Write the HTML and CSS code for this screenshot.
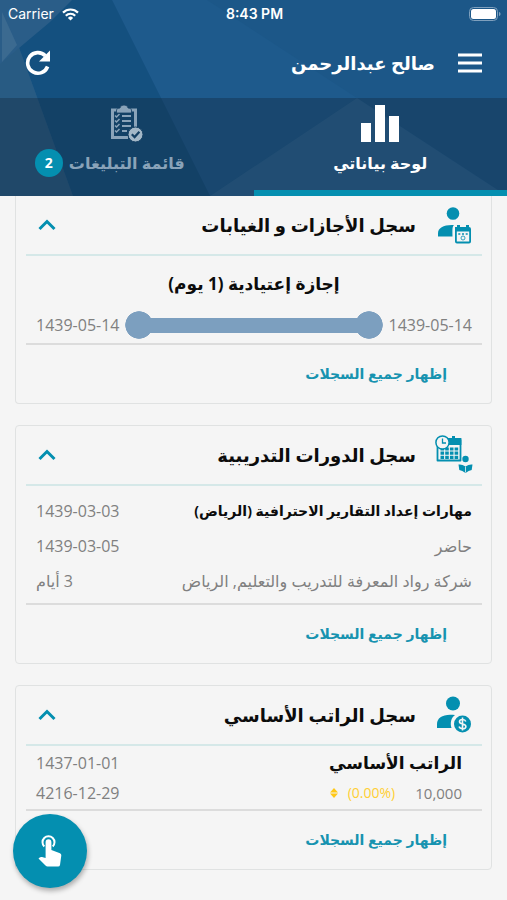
FILE: index.html
```html
<!DOCTYPE html>
<html lang="ar" dir="rtl">
<head>
<meta charset="utf-8">
<meta name="viewport" content="width=device-width, initial-scale=1">
<title>لوحة بياناتي</title>
<link rel="stylesheet" href="styles.css">
</head>
<body>
<header class="top">
  <svg class="top-art" viewBox="0 0 507 196" preserveAspectRatio="none" aria-hidden="true">
    <path fill="#1c5788" d="M0 0H507V196H0z"/>
    <path fill="#1e5a8c" d="M112 0 207 0 357 98 210 196z"/>
    <path fill="#2a6393" d="M357 98 210 196H507z"/>
    <path fill="#14507f" d="M62 0H112L210 196H73L17 42z"/>
    <path fill="#285b83" d="M0 62 17 42 73 196H0z"/>
    <path fill="#2a5d88" d="M0 0H72L50 22 0 64z"/>
    <path fill="#3b6a90" d="M2 12 17 45 2 62z"/>
  </svg>
  <div class="status" dir="ltr">
    <span class="carrier">Carrier
      <svg width="17" height="13" viewBox="0 0 17 13" fill="none" stroke="#fff" stroke-width="2.200" aria-hidden="true"><path d="M1 4.600a10.600 10.600 0 0 1 15 0M3.800 7.700a6.600 6.600 0 0 1 9.400 0"/><path d="M8.500 12.500 5.900 9.900a3.700 3.700 0 0 1 5.200 0z" fill="#fff" stroke="none"/></svg>
    </span>
    <span class="clock">8:43 PM</span>
    <svg class="battery" width="32" height="15" viewBox="0 0 32 15" aria-hidden="true"><rect x=".5" y=".5" width="28" height="13" rx="4" fill="none" stroke="#7fa0bd"/><rect x="2" y="2" width="25" height="10" rx="2.500" fill="#fff"/><path d="M30 5c2 .6 2 3.400 0 4z" fill="#7fa0bd"/></svg>
  </div>
  <div class="bar">
    <button class="icon-btn" type="button" aria-label="القائمة"><svg width="24" height="20" viewBox="0 0 24 20" fill="#fff"><path d="M0 .5h24v3H0zM0 8.500h24v3H0zM0 16.500h24v3H0z"/></svg></button>
    <h1 class="name">صالح عبدالرحمن</h1>
    <button class="icon-btn" type="button" aria-label="تحديث"><svg width="26" height="26" viewBox="0 0 26 26"><path d="M22.600 16.500A10.300 10.300 0 1 1 20.300 5.700" fill="none" stroke="#fff" stroke-width="3.600"/><path d="M25 .5v11H14z" fill="#fff"/></svg></button>
  </div>
  <nav class="tabs">
    <button class="tab tab-on" type="button">
      <svg width="38" height="38" viewBox="0 0 38 38" fill="#fff" aria-hidden="true"><path d="M0 18h10v19H0zM14 0h10v37H14zM28 11h10v26H28z"/></svg>
      <span class="tab-label">لوحة بياناتي</span>
    </button>
    <button class="tab tab-off" type="button">
      <svg width="33" height="38" viewBox="0 0 33 38" aria-hidden="true"><g fill="none" stroke="#8aa3b9"><path d="M18 32.500H2.500V5H25.500V23" stroke-width="3"/><path d="M12 11h9M12 16h9M12 21h9M12 26h5" stroke-width="2"/><path d="m5 10.500 1.500 1.500L9.500 9M5 15.500l1.500 1.500 3-3M5 20.500l1.500 1.500 3-3M5 25.500l1.500 1.500 3-3" stroke-width="1.500"/></g><path d="M6.500 8V5q0-2 3.500-2 0-3 4-3t4 3q3.500 0 3.500 2v3z" fill="#8aa3b9" stroke="#143f63" stroke-width=".8"/><circle cx="25.500" cy="29.500" r="7.500" fill="#a3b7c7" stroke="#143f63" stroke-width="1"/><path d="m21.800 29.300 2.800 2.800 4.800-5.300" fill="none" stroke="#143f63" stroke-width="2.200"/></svg>
      <span class="tab-label">قائمة التبليغات<span class="badge">2</span></span>
    </button>
  </nav>
</header>

<main class="cards">
  <section class="card card-first">
    <button class="card-head" type="button" aria-expanded="true">
      <svg class="card-icon" width="40" height="40" viewBox="0 0 40 40" aria-hidden="true"><circle cx="20" cy="8.500" r="6.300" fill="#048fb0"/><path d="M5 31.500v-3c0-6 6-9 16-8.500-2 2-1.500 5-1.500 11.500z" fill="#048fb0"/><path d="M22 22h2v-2h3v2h6v-2h3v2q2 0 2 2v12.500q0 2-2 2H24q-2 0-2-2V24q0-2 0-2z" fill="#048fb0"/><path d="M23.800 26.500h12.400v10H23.800z" fill="#f5f5f5"/><path d="M25.300 29h2M29 29h2M32.700 29h2" stroke="#048fb0" stroke-width="1.600"/><circle cx="30" cy="33" r="2" fill="none" stroke="#048fb0" stroke-width=".8"/></svg>
      <span class="card-title">سجل الأجازات و الغيابات</span>
      <svg class="chev" width="18" height="12" viewBox="0 0 18 12" aria-hidden="true"><path d="m1.500 10 7.500-7.500L16.500 10" fill="none" stroke="#048fb0" stroke-width="3"/></svg>
    </button>
    <div class="card-body leave">
      <h3 class="leave-title">إجازة إعتيادية (1 يوم)</h3>
      <div class="span-row">
        <span class="num">1439-05-14</span><span class="span-line"></span><span class="num">1439-05-14</span>
      </div>
    </div>
    <div class="card-foot"><a class="more" href="#leaves">إظهار جميع السجلات</a></div>
  </section>

  <section class="card">
    <button class="card-head" type="button" aria-expanded="true">
      <svg class="card-icon" width="40" height="40" viewBox="0 0 40 40" aria-hidden="true"><path d="M4.500 5h23v20.500H4.500z" fill="#f5f5f5" stroke="#048fb0" stroke-width="1.800" stroke-linejoin="round"/><path d="M5 3h14V1h3v2h6.400v7H5z" fill="#048fb0"/><path d="M7.500 14h18M7.500 18.200h18M7.500 22.400h18" stroke="#048fb0" stroke-width="3.200" stroke-dasharray="3.600 1.100"/><circle cx="9.500" cy="7.500" r="6.600" fill="#f5f5f5" stroke="#048fb0" stroke-width="1.500"/><path d="M9.500 3.500V8H13" fill="none" stroke="#048fb0" stroke-width="1.300"/><circle cx="32.500" cy="24" r="3.200" fill="#048fb0"/><path d="M25.500 29.500q3.500-.5 7 2 3.500-2.500 7-2l-.8 5.500q-3 .5-6.200 3-3.200-2.500-6.200-3z" fill="#048fb0"/><path d="M32.500 31.500v6" stroke="#b9dfe8"/></svg>
      <span class="card-title">سجل الدورات التدريبية</span>
      <svg class="chev" width="18" height="12" viewBox="0 0 18 12" aria-hidden="true"><path d="m1.500 10 7.500-7.500L16.500 10" fill="none" stroke="#048fb0" stroke-width="3"/></svg>
    </button>
    <div class="card-body course">
      <div class="line"><strong class="course-name">مهارات إعداد التقارير الاحترافية (الرياض)</strong><span class="num">1439-03-03</span></div>
      <div class="line"><span>حاضر</span><span class="num">1439-03-05</span></div>
      <div class="line"><span>شركة رواد المعرفة للتدريب والتعليم, الرياض</span><span>3 أيام</span></div>
    </div>
    <div class="card-foot"><a class="more" href="#courses">إظهار جميع السجلات</a></div>
  </section>

  <section class="card">
    <button class="card-head" type="button" aria-expanded="true">
      <svg class="card-icon" width="40" height="40" viewBox="0 0 40 40" aria-hidden="true"><circle cx="20" cy="8.500" r="7" fill="#048fb0"/><path d="M4 33v-4c0-7 7-10.500 18-9-4 3-5 8-3.500 13z" fill="#048fb0"/><circle cx="29.500" cy="29" r="8.500" fill="#048fb0"/><path d="M32.800 26.500c-.5-1.500-1.800-2-3.300-2-1.800 0-3 .8-3 2.200 0 3.200 6.400 1.500 6.400 4.800 0 1.500-1.400 2.300-3.300 2.300-1.800 0-3-.7-3.500-2.200M29.500 22.500v13" fill="none" stroke="#f5f5f5" stroke-width="1.600"/></svg>
      <span class="card-title">سجل الراتب الأساسي</span>
      <svg class="chev" width="18" height="12" viewBox="0 0 18 12" aria-hidden="true"><path d="m1.500 10 7.500-7.500L16.500 10" fill="none" stroke="#048fb0" stroke-width="3"/></svg>
    </button>
    <div class="card-body pay">
      <div class="line"><strong class="pay-name">الراتب الأساسي</strong><span class="num">1437-01-01</span></div>
      <div class="line"><span class="amount"><span class="figure">10,000</span><span class="change"><bdi dir="ltr">(0.00%)</bdi></span><svg width="8" height="10" viewBox="0 0 8 10" fill="#ffc817" aria-hidden="true"><path d="M4 0 8 4.400H0zM0 5.600h8L4 10z"/></svg></span><span class="num">4216-12-29</span></div>
    </div>
    <div class="card-foot"><a class="more" href="#salary">إظهار جميع السجلات</a></div>
  </section>
</main>

<button class="fab" type="button" aria-label="إجراءات">
  <svg width="24" height="34" viewBox="0 0 24 34" aria-hidden="true"><path d="M6.300 12.500A6 6 0 1 1 14.700 12.500" fill="none" stroke="#fff" stroke-width="2"/><path d="M7.600 24V8.200a2.900 2.900 0 0 1 5.800 0V16l8.600 3.300q1.500.7 1.300 2.200L22 31q-.3 1.500-2 1.500H9.500q-1 0-2-1L.5 24.600q1.500-2.200 3.500-1.500z" fill="#fff"/></svg>
</button>
</body>
</html>
```
FILE: styles.css
```css
* { box-sizing: border-box; }

body {
  margin: 0;
  min-height: 100vh;
  background: #f5f5f5;
  color: #808080;
  font: 16px/24px "Open Sans", "DejaVu Sans", sans-serif;
}

button {
  margin: 0;
  padding: 0;
  border: 0;
  background: none;
  color: inherit;
  font: inherit;
  cursor: pointer;
}

svg { display: block; flex: none; }

h1, h3 { margin: 0; }

/* Header */
.top { position: relative; color: #fff; }
.top-art { position: absolute; inset: 0; width: 100%; height: 100%; z-index: -1; }

.status {
  display: grid;
  grid-template-columns: 1fr auto 1fr;
  align-items: center;
  height: 28px;
  padding: 0 6px 0 8px;
  font: 14px/20px Inter, sans-serif;
}
.carrier { display: flex; align-items: center; gap: 8px; }
.clock { font-weight: 600; }
.battery { justify-self: end; }

.bar {
  display: flex;
  align-items: center;
  gap: 23px;
  height: 70px;
  padding: 0 25px;
}
.name { flex: 1; font-size: 18px; line-height: 32px; }

.tabs { display: flex; height: 98px; background: rgba(16, 36, 56, .35); }
.tab {
  flex: 1;
  display: flex;
  flex-direction: column;
  align-items: center;
  gap: 6px;
  padding-top: 7px;
  font-weight: 700;
}
.tab-on { border-bottom: 6px solid #048fb0; }
.tab-off { color: #8aa3b9; }
.tab-label { position: relative; line-height: 28px; }
.badge {
  position: absolute;
  top: 0;
  right: 100%;
  width: 28px;
  margin-right: 6px;
  border-radius: 14px;
  background: #048fb0;
  color: #fff;
  font-size: 14px;
}

/* Cards */
.cards { display: grid; gap: 21px; padding: 0 15px 29px; }
.card { padding: 0 9px 0 10px; border: 1px solid #e0e2e2; border-radius: 4px; }
.card-first { border-top: 0; border-radius: 0 0 4px 4px; }

.card-head {
  display: flex;
  align-items: center;
  gap: 17px;
  width: 100%;
  height: 60px;
  padding-inline: 9px 12px;
  border-bottom: 2px solid #d5e8e8;
}
.card-title {
  flex: 1;
  color: #0c0c0c;
  font-size: 18px;
  font-weight: 700;
  line-height: 32px;
  text-align: start;
}

.card-body { padding: 0 10px; border-bottom: 2px solid #dcdcdc; }
.line { display: flex; justify-content: space-between; align-items: center; }
.num { direction: ltr; white-space: nowrap; }
strong, .leave-title { color: #0c0c0c; }

.leave { padding-bottom: 4px; }
.leave-title { padding: 12px 0 11px; font-size: 17px; line-height: 32px; text-align: center; }
.span-row { display: flex; align-items: center; gap: 6px; }
.span-line {
  flex: 1;
  height: 28px;
  background:
    radial-gradient(circle closest-side, #7c9fbf 96%, transparent) left / 28px 28px no-repeat,
    radial-gradient(circle closest-side, #7c9fbf 96%, transparent) right / 28px 28px no-repeat,
    linear-gradient(#7c9fbf, #7c9fbf) center / calc(100% - 28px) 15px no-repeat;
}

.course { padding-block: 7px 5px; }
.course .line { height: 35px; }
.course-name { font-size: 14px; }

.pay { padding-block: 2px 1px; }
.pay .line { height: 30px; }
.pay-name { font-size: 17px; }
.pay strong, .amount { padding-inline-start: 10px; }
.amount { display: flex; align-items: center; gap: 10px; font-size: 15px; }
.figure { margin-inline-end: 10px; }
.change { color: #ffcf33; font-size: 14px; }

.card-foot { display: flex; align-items: center; height: 58px; padding-inline: 35px; }
.more { color: #1793b0; font-size: 14px; font-weight: 700; text-decoration: none; }

.fab {
  position: fixed;
  left: 13px;
  bottom: 12px;
  display: grid;
  place-items: center;
  width: 74px;
  height: 74px;
  border-radius: 50%;
  background: #048fb0;
  box-shadow: 1px 3px 5px rgba(0, 0, 0, .3);
}
```
